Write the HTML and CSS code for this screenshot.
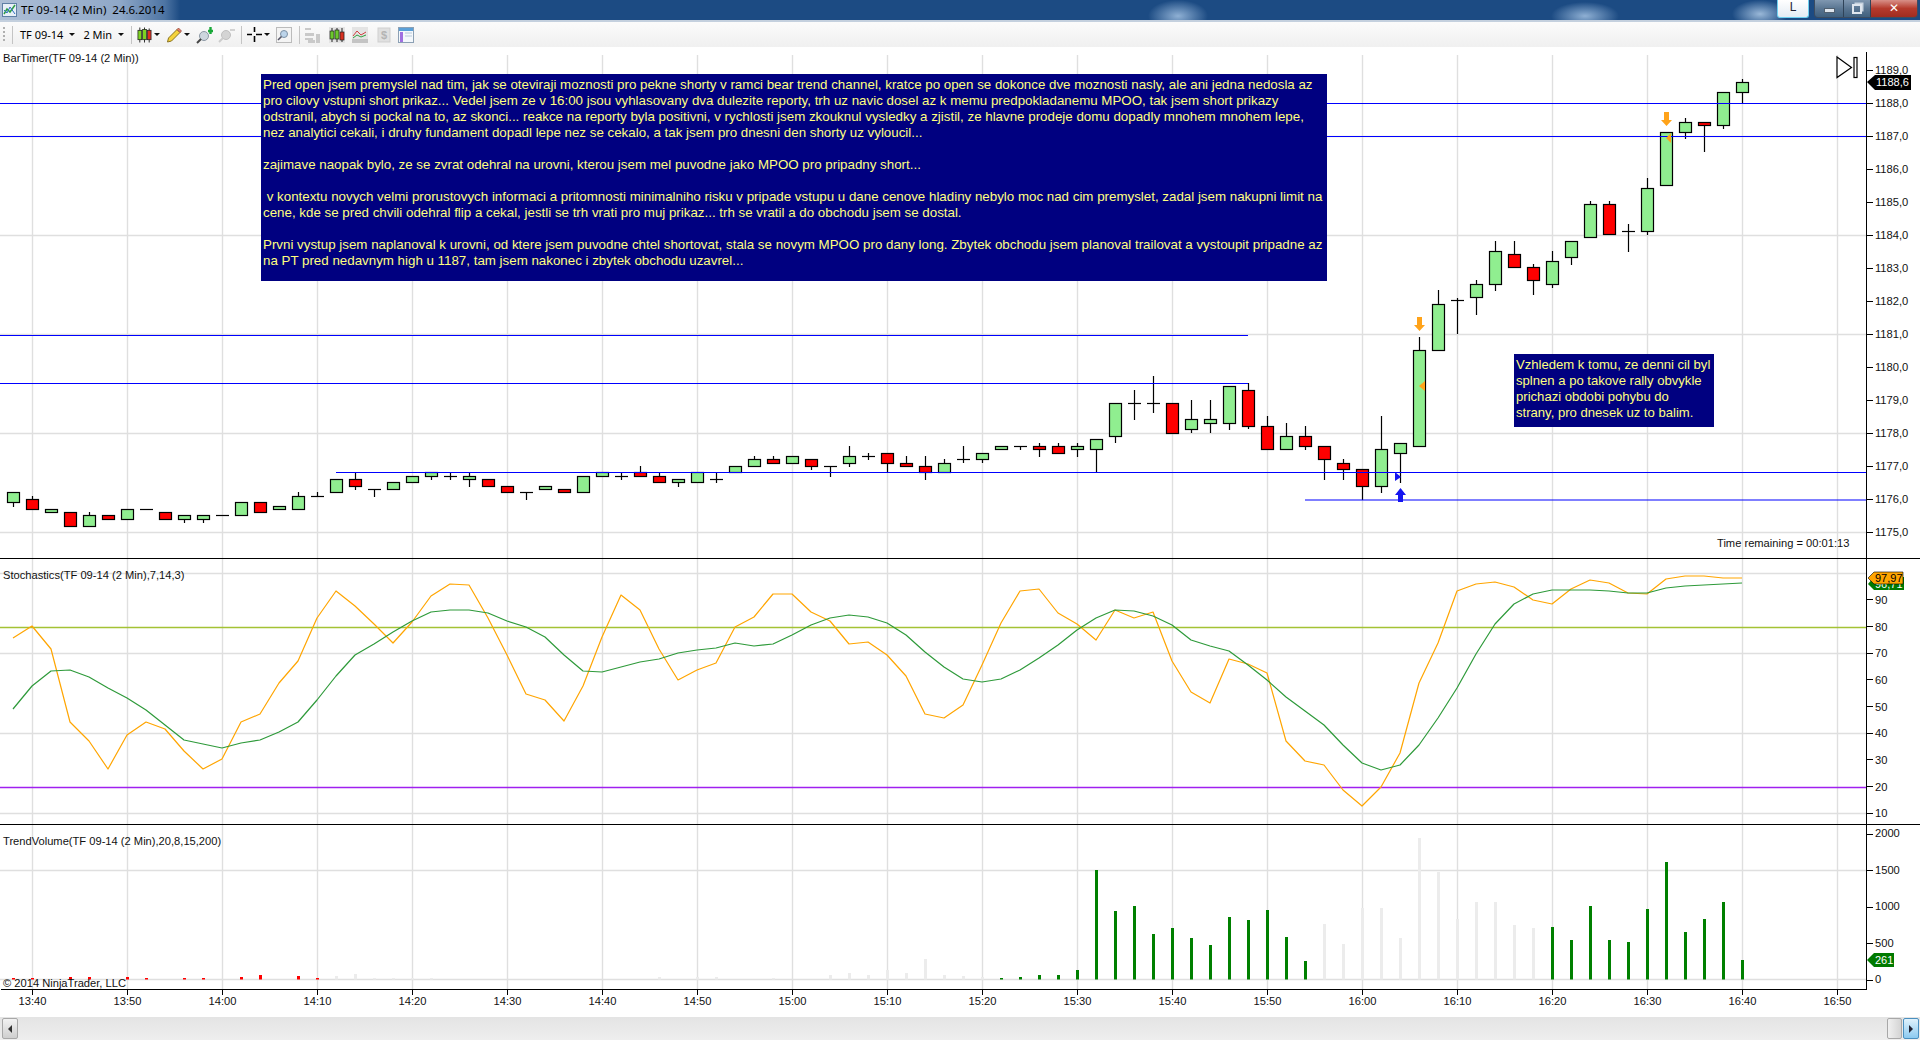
FILE: index.html
```html
<!DOCTYPE html>
<html lang="cs">
<head>
<meta charset="utf-8">
<title>TF 09-14 (2 Min) 24.6.2014</title>
<link rel="stylesheet" href="styles.css">
</head>
<body>
<div class="window">
  <header class="titlebar">
    <svg class="app-icon" viewBox="0 0 16 16" width="16" height="16"><rect x=".5" y="1.500" width="14" height="13" fill="#e8f0f8" stroke="#5f7fa5"/><path d="M2 12l3-5 3 3 5-7" fill="none" stroke="#2f9e44" stroke-width="1.500"/><path d="M2 8l3 3 3-6 5 7" fill="none" stroke="#2f6fc0"/></svg>
    <span class="title-text">TF 09-14 (2 Min)&nbsp;&nbsp;24.6.2014</span>
    <div class="winbtns">
      <div class="btn-l">L</div>
      <div class="btn-group">
        <div class="btn-min"><span class="glyph-min"></span></div>
        <div class="btn-max"><span class="glyph-max"></span></div>
        <div class="btn-close">✕</div>
      </div>
    </div>
  </header>

  <nav class="toolbar">
    <span class="grip"></span>
    <span class="sep sep-first"></span>
    <span class="tb-text">TF 09-14</span><span class="caret ml-6"></span>
    <span class="tb-text ml-8">2 Min</span><span class="caret ml-6"></span>
    <span class="sep ml-7"></span>
    <svg class="ico" viewBox="0 0 16 16" width="15" height="16"><path d="M3 0v16M8 0v16M13 1v15" stroke="#222"/><rect x="1" y="3" width="4" height="10" fill="#7ed321" stroke="#222" stroke-width=".8"/><rect x="6" y="2" width="4" height="11" fill="#7ed321" stroke="#222" stroke-width=".8"/><rect x="11" y="3" width="4" height="10" fill="#e03020" stroke="#222" stroke-width=".8"/></svg><span class="caret ml-2"></span>
    <svg class="ico ml-6" viewBox="0 0 16 16" width="16" height="16"><path d="M1.500 15l1-4L11 2.500l3 3L5.500 14z" fill="#f5d33c" stroke="#8a7320"/><path d="M11 2.500l1.500-1.500 3 3L14 5.500z" fill="#e8806a" stroke="#8a4030" stroke-width=".7"/></svg><span class="caret ml-2"></span>
    <svg class="ico ml-6" viewBox="0 0 18 18" width="18" height="18"><circle cx="8" cy="10" r="4.500" fill="#cdd6de" stroke="#8c98a4"/><path d="M5 13l-4 4" stroke="#444" stroke-width="2"/><path d="M12 5h5M14.500 1v7" stroke="#18a838" stroke-width="2.400"/></svg>
    <svg class="ico ml-4" viewBox="0 0 18 18" width="18" height="18"><circle cx="8" cy="9" r="4.500" fill="#d4d4d4" stroke="#c0c0c0"/><path d="M5 12l-4 4" stroke="#ccc" stroke-width="2"/><path d="M12 4h5" stroke="#c8c8c8" stroke-width="1.600"/></svg>
    <span class="sep ml-5"></span>
    <svg class="ico" viewBox="0 0 15 15" width="15" height="15"><path d="M0 7.500h5M9 7.500h6M7.500 0v5M7.500 9v6" stroke="#000" stroke-width="1.600"/></svg><span class="caret ml-2"></span>
    <svg class="ico ml-6" viewBox="0 0 16 16" width="16" height="16"><rect x=".5" y=".5" width="15" height="15" fill="#f4f4f4" stroke="#bbb"/><circle cx="8" cy="7" r="3.500" fill="#bcd4ea" stroke="#7c90a4"/><path d="M5.500 9.500L2 13" stroke="#556" stroke-width="1.600"/></svg>
    <span class="sep ml-7"></span>
    <svg class="ico" viewBox="0 0 16 16" width="16" height="16"><g fill="#c9c9c9"><rect y="1" width="6" height="2"/><rect y="6" width="9" height="3"/><rect y="11" width="8" height="2"/><rect x="11" y="7" width="4" height="9"/><rect x="3" y="13" width="7" height="3"/></g></svg>
    <svg class="ico ml-8" viewBox="0 0 16 16" width="16" height="16"><rect width="16" height="16" fill="#e4e4e4"/><path d="M3 1v14M8 1v14M13 1v14" stroke="#222"/><rect x="1" y="4" width="4" height="8" fill="#6cc82c" stroke="#222" stroke-width=".7"/><rect x="6" y="3" width="4" height="9" fill="#6cc82c" stroke="#222" stroke-width=".7"/><rect x="11" y="5" width="4" height="8" fill="#d83020" stroke="#222" stroke-width=".7"/></svg>
    <svg class="ico ml-7" viewBox="0 0 16 16" width="16" height="16"><rect width="16" height="16" fill="#e4e4e4"/><path d="M1 9l4-5 4 4 5-3" fill="none" stroke="#d04040"/><path d="M1 11l4-3 4 2 5-2" fill="none" stroke="#30a040"/><path d="M0 12h16v4H0z" fill="#c4c4c4"/></svg>
    <svg class="ico ml-8" viewBox="0 0 16 16" width="16" height="16"><rect x="2" y="1" width="12" height="14" fill="#e0e0e0" stroke="#cfcfcf"/><text class="ico-dollar" x="8" y="12">$</text></svg>
    <svg class="ico ml-6" viewBox="0 0 16 16" width="16" height="16"><rect x=".5" y=".5" width="15" height="15" fill="#f4f8fc" stroke="#8ca0b4"/><rect x="1" y="1" width="14" height="3" fill="#5aa0d8"/><rect x="2" y="5" width="3" height="10" fill="#a070e0"/><path d="M7 6h7M7 9h7" stroke="#b8c8d8"/></svg>
  </nav>

  <main class="chart">
    <svg id="price" class="panel" viewBox="0 47 1920 512" width="1920" height="512"></svg>
    <svg id="stoch" class="panel" viewBox="0 559 1920 266" width="1920" height="266"></svg>
    <svg id="vol" class="panel" viewBox="0 825 1920 192" width="1920" height="192"></svg>

    <section class="note note-main">
      <p>Pred open jsem premyslel nad tim, jak se oteviraji moznosti pro pekne shorty v ramci bear trend channel, kratce po open se dokonce dve moznosti nasly, ale ani jedna nedosla az<br>pro cilovy vstupni short prikaz... Vedel jsem ze v 16:00 jsou vyhlasovany dva dulezite reporty, trh uz navic dosel az k memu predpokladanemu MPOO, tak jsem short prikazy<br>odstranil, abych si pockal na to, az skonci... reakce na reporty byla positivni, v rychlosti jsem zkouknul vysledky a zjistil, ze hlavne prodeje domu dopadly mnohem mnohem lepe,<br>nez analytici cekali, i druhy fundament dopadl lepe nez se cekalo, a tak jsem pro dnesni den shorty uz vyloucil...</p>
      <p>zajimave naopak bylo, ze se zvrat odehral na urovni, kterou jsem mel puvodne jako MPOO pro pripadny short...</p>
      <p>&nbsp;v kontextu novych velmi prorustovych informaci a pritomnosti minimalniho risku v pripade vstupu u dane cenove hladiny nebylo moc nad cim premyslet, zadal jsem nakupni limit na<br>cene, kde se pred chvili odehral flip a cekal, jestli se trh vrati pro muj prikaz... trh se vratil a do obchodu jsem se dostal.</p>
      <p>Prvni vystup jsem naplanoval k urovni, od ktere jsem puvodne chtel shortovat, stala se novym MPOO pro dany long. Zbytek obchodu jsem planoval trailovat a vystoupit pripadne az<br>na PT pred nedavnym high u 1187, tam jsem nakonec i zbytek obchodu uzavrel...</p>
    </section>
    <section class="note note-side">
      <p>Vzhledem k tomu, ze denni cil byl<br>splnen a po takove rally obvykle<br>prichazi obdobi pohybu do<br>strany, pro dnesek uz to balim.</p>
    </section>
  </main>

  <footer class="hscroll">
    <div class="sb-btn sb-left"><span class="arrow-left"></span></div>
    <div class="sb-track"></div>
    <div class="sb-thumb"></div>
    <div class="sb-btn sb-right"><span class="arrow-right"></span></div>
  </footer>
</div>
<script src="script.js"></script>
</body>
</html>
```

FILE: styles.css
```css
* { box-sizing: border-box; }
html, body { margin: 0; padding: 0; height: 100%; background: #fff; overflow: hidden; }
.window { width: 1920px; height: 1040px; display: flex; flex-direction: column; font-family: "Liberation Sans", Arial, sans-serif; }

.titlebar {
  height: 22px; flex: none; display: flex; align-items: flex-start; padding-left: 2px;
  color: #000; font-family: "Noto Sans", sans-serif; font-size: 11.5px;
  border-bottom: 2px solid #c4d0de;
  background:
    radial-gradient(ellipse 30px 16px at 1178px 16px, #8fb0d4, transparent),
    radial-gradient(ellipse 34px 14px at 1585px 16px, #8fb0d4, transparent),
    radial-gradient(ellipse 28px 14px at 1760px 14px, #9ab8d8, transparent),
    linear-gradient(90deg, #aebfd6 0, #8fa8c8 120px, #4d74a3 165px, #1c4b83 180px, #1c4b83 100%);
}
.app-icon { margin-top: 2px; flex: none; }
.title-text { margin-left: 3px; line-height: 20px; white-space: pre; }
.winbtns { margin-left: auto; display: flex; align-items: flex-start; padding-right: 2px; }
.btn-l { width: 32px; height: 18px; margin-right: 5px; background: linear-gradient(#fff, #e4ecf4); border: 1px solid #6fd0f0; border-top: 0; border-radius: 0 0 3px 3px; text-align: center; font-size: 12px; line-height: 15px; color: #223; font-family: "Liberation Sans", sans-serif; }
.btn-group { display: flex; height: 18px; border: 1px solid #3c4c60; border-top: 0; border-radius: 0 0 4px 4px; overflow: hidden; }
.btn-min, .btn-max { width: 29px; background: linear-gradient(#7f97b0, #5a7692 50%, #40607e); border-right: 1px solid #2f4358; display: flex; align-items: center; justify-content: center; }
.btn-max { width: 27px; }
.btn-close { width: 46px; background: linear-gradient(#d89088, #b53a2c 50%, #a02c20); color: #fff; text-align: center; font-size: 12px; line-height: 16px; font-weight: bold; font-family: "DejaVu Sans", sans-serif; }
.glyph-min { width: 11px; height: 5px; margin-top: 3px; background: #dfe6ee; border: 1px solid #506070; }
.glyph-max { width: 10px; height: 10px; background: transparent; border: 2px solid #dfe6ee; box-shadow: 2px -2px 0 -0.5px #c8d4e0; }

.toolbar {
  height: 25px; flex: none; display: flex; align-items: center; padding-left: 3px;
  background: linear-gradient(#fbfbfb, #f0f0f0);
  font-family: "Noto Sans", sans-serif; font-size: 11px; color: #000;
}
.grip { width: 2px; height: 15px; flex: none; background: repeating-linear-gradient(#b0b0b0 0 2px, transparent 2px 4px); }
.sep { width: 1px; height: 18px; background: #c4c4c4; margin-right: 5px; flex: none; }
.sep-first { margin-left: 7px; margin-right: 7px; }
.tb-text { line-height: 18px; white-space: nowrap; }
.caret { width: 0; height: 0; border: 3px solid transparent; border-top: 3px solid #111; border-bottom: 0; flex: none; }
.ico { flex: none; display: block; }
.ml-2 { margin-left: 2px; }
.ml-4 { margin-left: 4px; }
.ml-5 { margin-left: 5px; }
.ml-6 { margin-left: 6px; }
.ml-7 { margin-left: 7px; }
.ml-8 { margin-left: 8px; }
.ico-dollar { font: bold 11px "Liberation Sans", sans-serif; fill: #b4b4b4; text-anchor: middle; }

.chart { position: relative; flex: none; width: 1920px; height: 970px; background: #fff; }
.panel { display: block; }

.grid { stroke: #dfdfdf; stroke-width: 1.4; fill: none; }
.axis { stroke: #000; stroke-width: 1; fill: none; shape-rendering: crispEdges; }
.sepline { stroke: #000; stroke-width: 1.4; shape-rendering: crispEdges; }
.wick { stroke: #000; stroke-width: 1.2; }
.body-up { fill: #90ee90; stroke: #000; stroke-width: 1.2; }
.body-dn { fill: #f00; stroke: #000; stroke-width: 1.2; }
.hline { stroke: #0000ff; stroke-width: 1.1; }
.lbl { font: 11.15px "Liberation Sans", sans-serif; fill: #111; }
.lbl-time { text-anchor: middle; }
.stoch-fast { fill: none; stroke: #ffa500; stroke-width: 1.2; stroke-linejoin: round; }
.stoch-slow { fill: none; stroke: #2e9a3a; stroke-width: 1.2; stroke-linejoin: round; }
.lvl80 { stroke: #a4c234; stroke-width: 1.3; }
.lvl20 { stroke: #a020f0; stroke-width: 1.3; }
.vol-g { fill: #008000; }
.vol-r { fill: #f00; }
.vol-p { fill: #ececec; }
.mark-or { fill: #ffa31a; }
.mark-bl { fill: #1414f0; }
.tag-blk { fill: #000; }
.tag-or { fill: #ffa500; stroke: #000; stroke-width: .6; }
.tag-gr { fill: #007a00; }
.tag-txt-w { font: 11px "Liberation Sans", sans-serif; fill: #fff; }
.tag-txt-b { font: 11px "Liberation Sans", sans-serif; fill: #000; }
.endbtn { fill: #fff; stroke: #000; stroke-width: 1.2; }

.note { position: absolute; background: #000080; color: #ffff80; font-family: "Liberation Sans", Arial, sans-serif; font-size: 13.33px; line-height: 16px; white-space: nowrap; }
.note p { margin: 0 0 16px; }
.note p:last-child { margin-bottom: 0; }
.note-main { left: 261px; top: 27px; width: 1066px; height: 207px; padding: 3px 2px; }
.note-side { left: 1514px; top: 307px; width: 200px; height: 73px; padding: 3px 2px; font-size: 13.1px; }

.hscroll { flex: none; height: 23px; display: flex; align-items: flex-start; background: linear-gradient(#e4e4e4, #eeeeee); padding: 0 1px; }
.sb-btn { width: 16px; height: 21px; margin-top: 1px; border: 1px solid #a8a8a8; border-radius: 2px; display: flex; align-items: center; justify-content: center; }
.sb-left { background: linear-gradient(#f2f2f2, #cfcfcf); margin-left: 1px; }
.sb-right { background: linear-gradient(#e0f2fc, #8ccaf0); border-color: #4a90c0; margin-left: 1px; }
.sb-track { flex: 1; }
.sb-thumb { width: 15px; height: 21px; margin-top: 1px; border: 1px solid #a8a8a8; border-radius: 2px; background: linear-gradient(90deg, #f0f0f0, #d4d4d4); }
.arrow-left { width: 0; height: 0; border: 4px solid transparent; border-right: 4px solid #333; border-left: 0; }
.arrow-right { width: 0; height: 0; border: 4px solid transparent; border-left: 4px solid #223; border-right: 0; }
```

FILE: script.js
```js
(function () {
  var NS = 'http://www.w3.org/2000/svg';
  function el(parent, tag, attrs, text) {
    var n = document.createElementNS(NS, tag);
    for (var k in attrs) n.setAttribute(k, attrs[k]);
    if (text !== undefined) n.textContent = text;
    parent.appendChild(n);
    return n;
  }
  function line(p, x1, y1, x2, y2, cls) { return el(p, 'line', { x1: x1, y1: y1, x2: x2, y2: y2, 'class': cls }); }
  function barX(i) { return 13 + 19 * i; }

  // [kind, bodyTop, bodyBottom, high, low]  (kind: g up, r down, d doji; 0 = no wick)
  var candles = [
    ['g',492,502,0,507],['r',499,509,496,0],['g',509,512,0,0],['r',512,526,0,0],['g',515,526,512,0],
    ['r',515,519,0,0],['g',509,519,0,0],['d',509,509,0,0],['r',512,519,0,0],['g',515,519,0,523],
    ['g',515,519,0,523],['d',515,515,0,0],['g',502,515,0,0],['r',502,512,0,0],['g',506,509,0,0],
    ['g',496,509,492,0],['d',496,496,492,0],['g',479,492,0,0],['r',479,486,472,490],['d',489,489,0,497],
    ['g',482,489,0,0],['g',476,482,0,0],['g',472,476,0,480],['d',476,476,472,480],['g',476,479,472,487],
    ['r',479,486,0,0],['r',486,492,0,0],['d',492,492,0,500],['g',486,489,0,0],['r',489,492,0,0],
    ['g',476,492,0,0],['g',472,476,0,0],['d',476,476,472,480],['r',472,476,466,0],['r',476,482,472,0],
    ['g',479,482,0,487],['g',472,482,0,0],['d',479,479,472,483],['g',466,472,0,0],['g',459,466,456,0],
    ['r',459,463,456,0],['g',456,463,0,0],['r',459,466,0,470],['d',466,466,0,477],['g',456,463,446,467],
    ['d',456,456,453,460],['r',453,463,0,472],['r',463,466,456,0],['r',466,472,456,480],['g',463,472,459,0],
    ['d',459,459,446,463],['g',453,459,0,463],['g',446,449,0,0],['d',446,446,0,450],['r',446,449,443,457],
    ['r',446,453,443,0],['g',446,449,443,457],['g',439,449,0,472],['g',403,436,0,443],['d',403,403,390,420],
    ['d',403,403,376,413],['r',403,433,0,0],['g',419,429,400,433],['g',419,423,400,433],['g',386,423,0,430],
    ['r',390,426,383,429],['r',426,449,416,0],['g',436,449,423,0],['r',436,446,426,450],['r',446,459,0,480],
    ['r',463,469,459,480],['r',469,486,0,500],['g',449,486,416,493],['g',443,453,0,483],['g',350,446,337,0],
    ['g',304,350,290,0],['d',300,300,298,334],['g',284,297,280,315],['g',251,284,241,291],['r',254,267,241,0],
    ['r',267,280,264,295],['g',261,284,251,288],['g',241,257,0,265],['g',204,237,201,0],['r',204,234,201,0],
    ['d',231,231,224,252],['g',188,231,178,235],['g',132,185,0,0],['g',122,132,118,139],['r',122,125,0,152],
    ['g',92,125,0,129],['g',82,92,79,103]
  ];

  var fast = [638,626,649,722,741,769,735,722,729,751,769,759,722,714,683,661,618,591,606,624,643,622,596,584,585,618,655,694,700,721,686,637,595,610,649,680,670,663,627,617,594,594,612,621,644,642,655,676,714,718,705,665,623,591,589,613,624,640,610,618,612,661,692,703,659,664,673,741,761,765,790,806,787,753,683,643,591,584,582,587,600,604,589,580,583,593,594,579,576,576,578,578];
  var slow = [709,686,671,670,677,688,698,710,725,740,744,748,743,740,732,722,700,676,655,644,632,621,612,610,610,613,621,627,637,655,671,672,667,662,659,653,650,648,643,646,644,635,625,618,615,617,623,635,652,667,679,682,679,670,658,645,630,618,610,611,616,625,640,646,651,665,680,697,711,725,745,763,770,765,745,718,688,654,624,604,594,590,590,590,591,593,593,588,586,585,584,583];

  var gridX = [];
  for (var g = 0; g < 20; g++) gridX.push(32 + 95 * g + 0.5);

  /* price panel */
  var P = document.getElementById('price');
  gridX.forEach(function (x) { line(P, x, 55, x, 558, 'grid'); });
  [136, 235, 334, 433, 532].forEach(function (y) { line(P, 0, y + .5, 1866, y + .5, 'grid'); });

  candles.forEach(function (c, i) {
    var x = barX(i) + .5, top = c[1] + .5, bot = c[2] + .5;
    if (c[3]) line(P, x, c[3], x, top, 'wick');
    if (c[4]) line(P, x, bot, x, c[4], 'wick');
    if (c[0] === 'd') line(P, x - 6.5, top, x + 6.5, top, 'wick');
    else el(P, 'rect', { x: x - 6, y: top, width: 12, height: bot - top, 'class': c[0] === 'g' ? 'body-up' : 'body-dn' });
  });

  [[0, 1866, 103], [0, 1866, 136], [0, 1248, 335], [0, 1248, 383], [336, 1866, 472], [1305, 1866, 499.5]].forEach(function (h) {
    line(P, h[0], h[2] + .5, h[1], h[2] + .5, 'hline');
  });

  function downArrow(cx, y, cls) {
    el(P, 'polygon', { points: [cx-2,y, cx+3,y, cx+3,y+8, cx+6,y+8, cx+.5,y+14, cx-5,y+8, cx-2,y+8].join(' '), 'class': cls });
  }
  downArrow(1419, 317, 'mark-or');
  downArrow(1666, 112, 'mark-or');
  el(P, 'polygon', { points: '1400.500,488 1406,495 1403,495 1403,502 1398,502 1398,495 1395,495', 'class': 'mark-bl' });
  el(P, 'polygon', { points: '1395,472 1401,477 1395,481', 'class': 'mark-bl' });
  el(P, 'polygon', { points: '1425,381 1419,386 1425,391', 'class': 'mark-or' });
  el(P, 'polygon', { points: '1671,133 1666,138 1671,143', 'class': 'mark-or' });

  // end-of-chart button
  el(P, 'polygon', { points: '1837,57 1851.500,67.500 1837,77.500', 'class': 'endbtn' });
  el(P, 'rect', { x: 1854, y: 57.5, width: 3, height: 20, 'class': 'endbtn' });

  line(P, 1866.5, 52, 1866.5, 558, 'axis');
  for (var p = 1175; p <= 1189; p++) {
    var py = 70 + 33 * (1189 - p);
    line(P, 1866, py + .5, 1873, py + .5, 'axis');
    el(P, 'text', { x: 1875, y: py + 4, 'class': 'lbl' }, p + ',0');
  }
  el(P, 'polygon', { points: '1867,82 1875,75 1911,75 1911,90 1875,90', 'class': 'tag-blk' });
  el(P, 'text', { x: 1876, y: 86, 'class': 'tag-txt-w' }, '1188,6');

  el(P, 'text', { x: 3, y: 62, 'class': 'lbl' }, 'BarTimer(TF 09-14 (2 Min))');
  el(P, 'text', { x: 1717, y: 547, 'class': 'lbl' }, 'Time remaining = 00:01:13');
  line(P, 0, 558.5, 1920, 558.5, 'sepline');

  /* stochastics panel */
  var S = document.getElementById('stoch');
  gridX.forEach(function (x) { line(S, x, 559, x, 825, 'grid'); });
  [573, 653, 733, 813].forEach(function (y) { line(S, 0, y + .5, 1866, y + .5, 'grid'); });
  line(S, 0, 627.5, 1866, 627.5, 'lvl80');
  line(S, 0, 787.5, 1866, 787.5, 'lvl20');
  function poly(data, cls) {
    el(S, 'polyline', { points: data.map(function (y, i) { return barX(i) + ',' + y; }).join(' '), 'class': cls });
  }
  poly(fast, 'stoch-fast');
  poly(slow, 'stoch-slow');
  line(S, 1866.5, 559, 1866.5, 825, 'axis');
  for (var v = 10; v <= 90; v += 10) {
    var sy = 813.3 - (v - 10) * 2.667;
    line(S, 1866, sy, 1873, sy, 'axis');
    el(S, 'text', { x: 1875, y: sy + 4, 'class': 'lbl' }, String(v));
  }
  el(S, 'polygon', { points: '1868,584 1874,577 1904,577 1904,590 1874,590', 'class': 'tag-gr' });
  el(S, 'text', { x: 1875, y: 588, 'class': 'tag-txt-w' }, '96,71');
  el(S, 'polygon', { points: '1868,578 1874,572 1903,572 1903,584 1874,584', 'class': 'tag-or' });
  el(S, 'text', { x: 1875, y: 582, 'class': 'tag-txt-b' }, '97,97');
  el(S, 'text', { x: 3, y: 579, 'class': 'lbl' }, 'Stochastics(TF 09-14 (2 Min),7,14,3)');
  line(S, 0, 824.5, 1920, 824.5, 'sepline');

  /* volume panel */
  var V = document.getElementById('vol');
  gridX.forEach(function (x) { line(V, x, 825, x, 989, 'grid'); });
  [870, 979].forEach(function (y) { line(V, 0, y + .5, 1866, y + .5, 'grid'); });

  function vbars(list, cls) {
    list.forEach(function (b) {
      el(V, 'rect', { x: b[0] - 1, y: b[1], width: 3, height: 979.5 - b[1], 'class': cls });
    });
  }
  vbars([[13,978],[32,978],[70,977],[89,977],[127,977],[146,978],[184,978],[203,978],[241,977],[260,975],[298,976],[317,978]], 'vol-r');
  vbars([[336,976],[355,974],[374,978],[393,978],[412,978],[431,978],[659,977],[697,977],[716,977],[773,978],[830,975],[849,973],[868,975],[887,970],[906,973],[925,959],[944,975],[963,976],[982,977],
         [1324,924],[1343,944],[1362,908],[1381,908],[1400,938],[1419,838],[1438,872],[1457,919],[1476,902],[1495,902],[1514,925],[1533,928]], 'vol-p');
  vbars([[1001,978],[1020,977],[1039,975],[1058,975],[1077,970],[1096,870],[1115,911],[1134,906],[1153,934],[1172,928],[1191,938],[1210,945],[1229,917],[1248,920],[1267,910],[1286,937],[1305,961],
         [1552,927],[1571,940],[1590,906],[1609,940],[1628,942],[1647,909],[1666,862],[1685,932],[1704,919],[1723,902],[1742,960]], 'vol-g');

  line(V, 1866.5, 825, 1866.5, 989, 'axis');
  [[2000,834],[1500,870.5],[1000,907],[500,943.5],[0,980]].forEach(function (t) {
    line(V, 1866, t[1], 1873, t[1], 'axis');
    el(V, 'text', { x: 1875, y: t[1] + 3, 'class': 'lbl' }, String(t[0]));
  });
  el(V, 'polygon', { points: '1867,960 1874,953 1894,953 1894,967 1874,967', 'class': 'tag-gr' });
  el(V, 'text', { x: 1875, y: 964, 'class': 'tag-txt-w' }, '261');
  el(V, 'text', { x: 3, y: 845, 'class': 'lbl' }, 'TrendVolume(TF 09-14 (2 Min),20,8,15,200)');
  el(V, 'text', { x: 3, y: 987, 'class': 'lbl' }, '\u00A9 2014 NinjaTrader, LLC');

  // time axis
  line(V, 1, 989.5, 1867, 989.5, 'axis');
  var h = 13, m = 40;
  gridX.forEach(function (x) {
    line(V, x, 989, x, 995, 'axis');
    el(V, 'text', { x: x, y: 1005, 'class': 'lbl lbl-time' }, h + ':' + (m < 10 ? '0' + m : m));
    m += 10; if (m === 60) { m = 0; h++; }
  });
})();
```
